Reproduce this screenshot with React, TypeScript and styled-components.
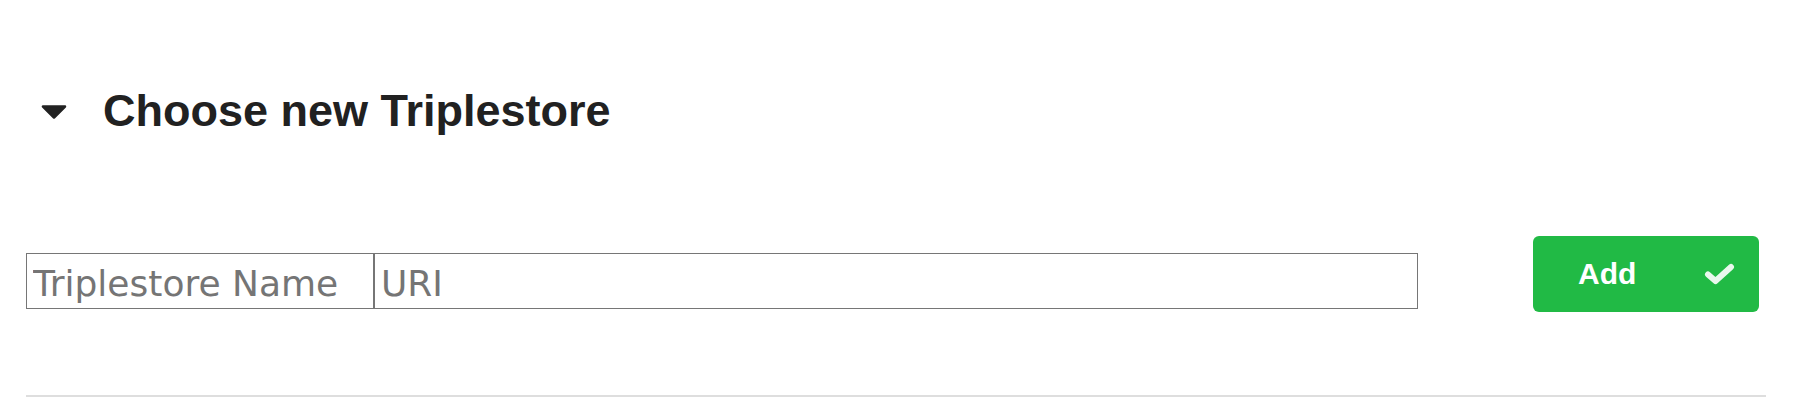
import React from "react";
import styled, { createGlobalStyle } from "styled-components";

const GlobalStyle = createGlobalStyle`
  html, body {
    margin: 0;
    padding: 0;
    background: #ffffff;
  }
  body {
    font-family: "Liberation Sans", Arial, sans-serif;
  }
`;

const Page = styled.div`
  padding: 86px 28px 0 26px;
  width: 1794px;
  box-sizing: border-box;
`;

const SectionHeader = styled.div`
  display: flex;
  align-items: center;
  height: 50px;
`;

const Caret = styled.svg`
  width: 26px;
  height: 14px;
  margin-left: 15px;
  margin-right: 36px;
  margin-top: 2px;
  flex: none;
`;

const Title = styled.h2`
  margin: 0;
  font-family: "Liberation Sans", Arial, sans-serif;
  font-weight: 700;
  font-size: 45px;
  line-height: 50px;
  color: #212121;
`;

const FormRow = styled.div`
  display: flex;
  align-items: flex-start;
  margin-top: 100px;
`;

const InputGroup = styled.div`
  display: flex;
  margin-top: 17px;
`;

const TextInput = styled.input<{ $width: number }>`
  box-sizing: border-box;
  width: ${(p) => p.$width}px;
  height: 56px;
  margin: 0;
  padding: 4px 6px 0 6px;
  border: 1px solid #767676;
  border-radius: 0;
  background: #fff;
  font-family: "DejaVu Sans", Verdana, sans-serif;
  font-size: 36px;
  color: #333;
  outline: none;
  &::placeholder {
    color: #757575;
    opacity: 1;
  }
`;

const Spacer = styled.div`
  flex: 1;
`;

const AddButton = styled.button`
  display: flex;
  align-items: center;
  box-sizing: border-box;
  width: 226px;
  height: 76px;
  margin-right: 7px;
  padding: 0 24px 0 45px;
  border: none;
  border-radius: 6px;
  background: #21ba45;
  color: #ffffff;
  font-family: "Liberation Sans", Arial, sans-serif;
  font-weight: 700;
  font-size: 30px;
  cursor: pointer;
`;

const ButtonLabel = styled.span`
  flex: 1;
  text-align: left;
  line-height: 1;
`;

const CheckIcon = styled.svg`
  width: 31px;
  height: 22px;
  flex: none;
`;

const Divider = styled.hr`
  margin: 83px 0 0 0;
  height: 0;
  border: none;
  border-top: 2px solid #dedede;
`;

export default function App() {
  return (
    <>
      <GlobalStyle />
      <Page>
        <SectionHeader>
          <Caret viewBox="0 0 26 14">
            <polygon
              points="2,1.5 24,1.5 13,12.5"
              fill="#222"
              stroke="#222"
              strokeWidth="2.5"
              strokeLinejoin="round"
            />
          </Caret>
          <Title>Choose new Triplestore</Title>
        </SectionHeader>
        <FormRow>
          <InputGroup>
            <TextInput $width={348} placeholder="Triplestore Name" />
            <TextInput $width={1044} placeholder="URI" />
          </InputGroup>
          <Spacer />
          <AddButton>
            <ButtonLabel>Add</ButtonLabel>
            <CheckIcon viewBox="0 0 31 22">
              <polyline
                points="4,11.5 11.5,18 27,4"
                fill="none"
                stroke="rgba(255,255,255,0.9)"
                strokeWidth="6"
                strokeLinecap="round"
                strokeLinejoin="round"
              />
            </CheckIcon>
          </AddButton>
        </FormRow>
        <Divider />
      </Page>
    </>
  );
}
